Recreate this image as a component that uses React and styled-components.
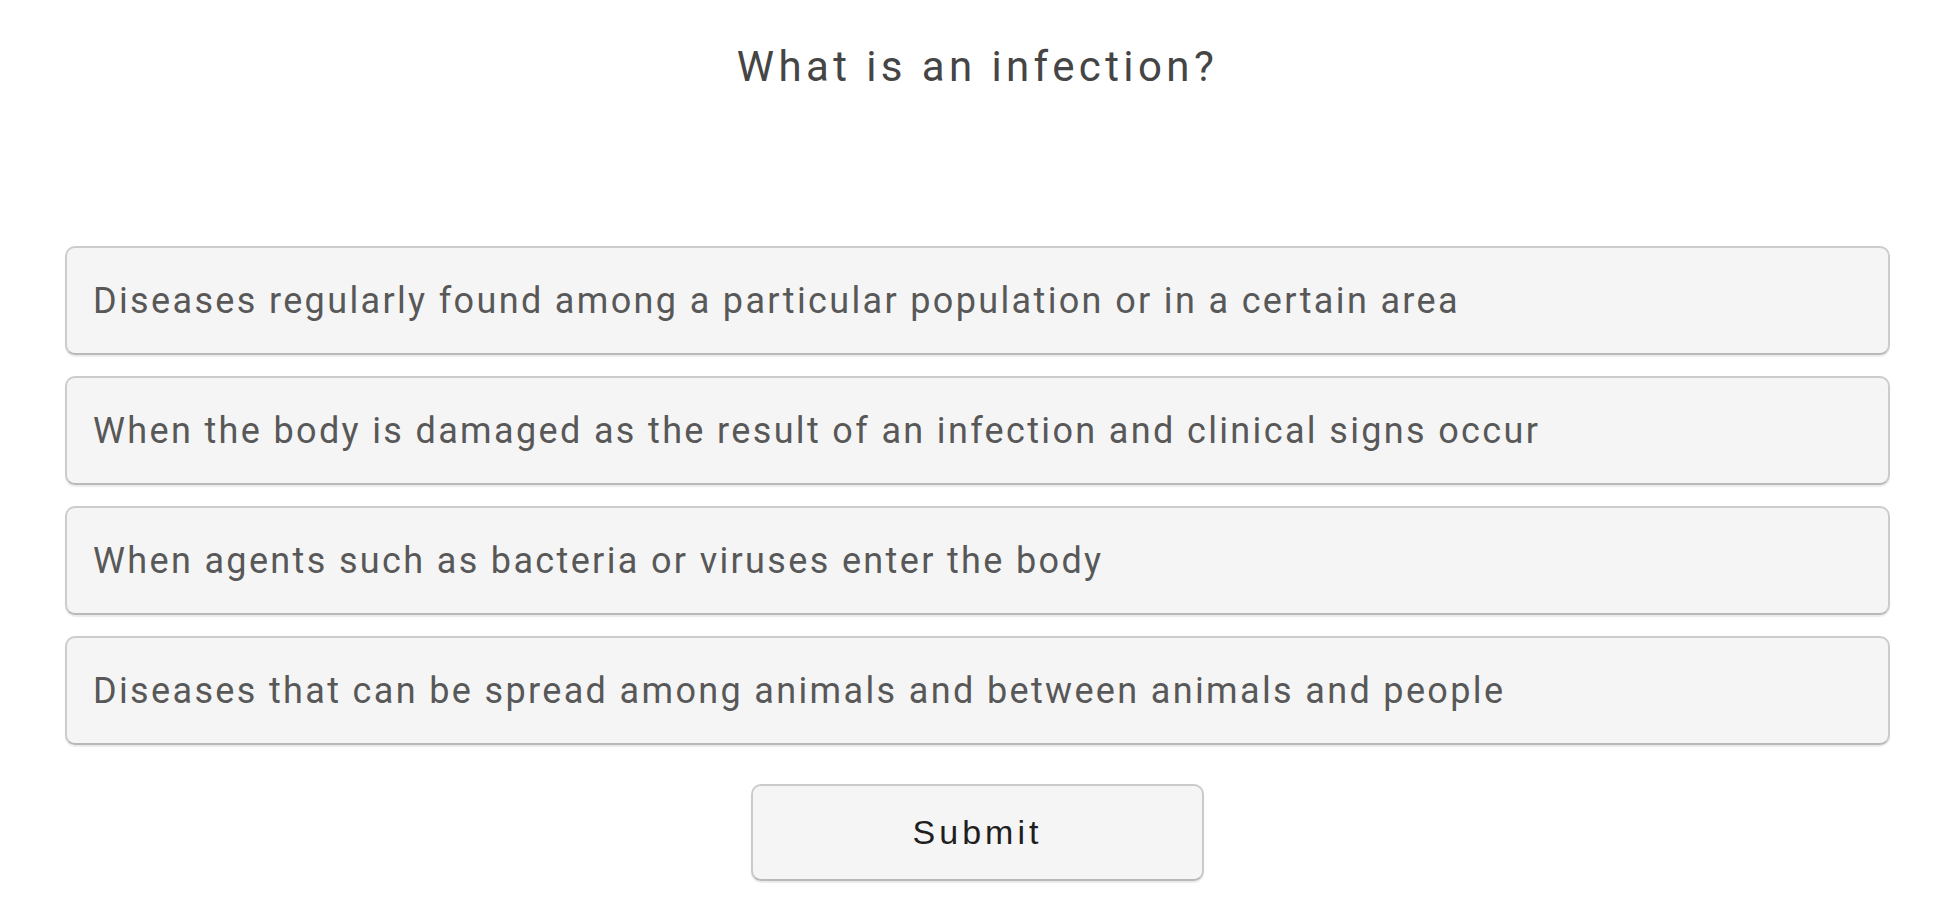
import React from "react";
import styled, { createGlobalStyle } from "styled-components";

const GlobalStyle = createGlobalStyle`
  html, body {
    margin: 0;
    padding: 0;
    background: #ffffff;
  }
  body {
    font-family: Roboto, "Noto Sans", sans-serif;
  }
`;

const Page = styled.main`
  width: 1953px;
  min-height: 900px;
  box-sizing: border-box;
  padding: 37px 63px 0 65px;
  display: flex;
  flex-direction: column;
  align-items: center;
`;

const Question = styled.h1`
  margin: 0;
  font-family: Roboto, "Noto Sans", sans-serif;
  font-weight: 400;
  font-size: 42px;
  line-height: 60px;
  letter-spacing: 4.4px;
  color: #454545;
  text-align: center;
`;

const Options = styled.ul`
  list-style: none;
  margin: 149px 0 0;
  padding: 0;
  width: 100%;
  display: flex;
  flex-direction: column;
  gap: 21px;
`;

const Option = styled.li`
  box-sizing: border-box;
  height: 109px;
  display: flex;
  align-items: center;
  padding: 0 26px;
  background: #f5f5f5;
  border: 2px solid #cccccc;
  border-bottom-color: #b9b9b9;
  border-radius: 10px;
  box-shadow: 0 2px 1px rgba(0, 0, 0, 0.08);
  font-family: Roboto, "Noto Sans", sans-serif;
  font-size: 36px;
  letter-spacing: 2.35px;
  color: #585858;
  cursor: pointer;
`;

const SubmitButton = styled.button`
  margin-top: 39px;
  width: 453px;
  height: 97px;
  box-sizing: border-box;
  background: #f5f5f5;
  border: 2px solid #cacaca;
  border-bottom-color: #b9b9b9;
  border-radius: 10px;
  box-shadow: 0 2px 1px rgba(0, 0, 0, 0.08);
  font-family: "Liberation Sans", Arial, sans-serif;
  font-size: 34px;
  letter-spacing: 4px;
  color: #1f1f1f;
  cursor: pointer;
`;

const answers = [
  "Diseases regularly found among a particular population or in a certain area",
  "When the body is damaged as the result of an infection and clinical signs occur",
  "When agents such as bacteria or viruses enter the body",
  "Diseases that can be spread among animals and between animals and people",
];

export default function App() {
  return (
    <>
      <GlobalStyle />
      <Page>
        <Question>What is an infection?</Question>
        <Options>
          {answers.map((a) => (
            <Option key={a}>{a}</Option>
          ))}
        </Options>
        <SubmitButton type="button">Submit</SubmitButton>
      </Page>
    </>
  );
}
